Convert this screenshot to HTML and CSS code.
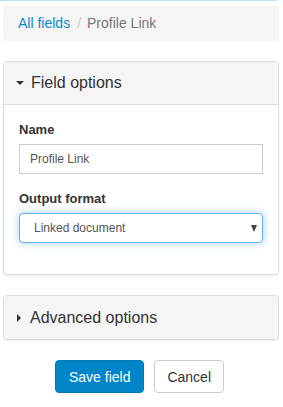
FILE: index.html
```html
<!DOCTYPE html>
<html lang="en">
<head>
  <meta charset="UTF-8" />
  <meta name="viewport" content="width=device-width, initial-scale=1.0" />
  <title>Edit field – Profile Link</title>
  <link rel="stylesheet" href="styles.css">
</head>
<body>
  <div class="topline"></div>

  <ol class="breadcrumb">
    <li><a href="#">All fields</a></li>
    <li class="active">Profile Link</li>
  </ol>

  <form class="field-form" autocomplete="off">
    <div class="panel">
      <div class="panel-heading">
        <span class="caret-down"></span>Field options
      </div>
      <div class="panel-body">
        <div class="form-group">
          <label for="name">Name</label>
          <input type="text" id="name" class="form-control" value="Profile Link" />
        </div>
        <div class="form-group">
          <label for="format">Output format</label>
          <div class="select-wrap">
            <select id="format" class="form-control focused">
              <option>Linked document</option>
            </select>
          </div>
        </div>
      </div>
    </div>

    <div class="panel panel-collapsed">
      <div class="panel-heading">
        <span class="caret-right"></span>Advanced options
      </div>
    </div>

    <div class="actions">
      <button type="submit" class="btn btn-primary">Save field</button>
      <button type="button" class="btn btn-default">Cancel</button>
    </div>
  </form>
</body>
</html>
```

FILE: styles.css
```css
:root {
  --azul: #0085c8;
  --gris-fondo: #f5f5f5;
  --borde: #dddddd;
  --texto: #333;
}

* {
  box-sizing: border-box;
}

body {
  font-family: "Liberation Sans", Arial, sans-serif;
  font-size: 14px;
  margin: 0;
  padding: 0 4px 0 3px;
  background: #fff;
  color: var(--texto);
}

.topline {
  height: 1px;
  margin: 0 2px 0 -3px;
  background: #b5e6ef;
}

.breadcrumb {
  list-style: none;
  margin: 5px 0 20px;
  padding: 8px 15px;
  line-height: 19px;
  background: var(--gris-fondo);
  border-radius: 4px;
  display: flex;
}

.breadcrumb a {
  color: #0a8ad0;
  text-decoration: none;
}

.breadcrumb li + li::before {
  content: "/";
  color: #ccc;
  padding: 0 6px 0 7px;
}

.breadcrumb .active {
  color: #777;
}

.panel {
  border: 1px solid var(--borde);
  border-radius: 4px;
  box-shadow: 0 1px 2px rgba(0, 0, 0, 0.08);
  margin-bottom: 20px;
  background: #fff;
}

.panel-heading {
  background: var(--gris-fondo);
  padding: 10px 12px;
  line-height: 22px;
  font-size: 16px;
  color: var(--texto);
  border-bottom: 1px solid var(--borde);
  border-radius: 3px 3px 0 0;
  display: flex;
  align-items: center;
}

.panel-collapsed .panel-heading {
  border-bottom: none;
  border-radius: 3px;
  padding: 11px 12px 10px;
}

.caret-down {
  width: 0;
  height: 0;
  border-left: 4px solid transparent;
  border-right: 4px solid transparent;
  border-top: 4px solid #333;
  margin-right: 7px;
}

.caret-right {
  width: 0;
  height: 0;
  border-top: 4px solid transparent;
  border-bottom: 4px solid transparent;
  border-left: 4px solid #333;
  margin: 0 9px 0 1px;
}

.panel-body {
  padding: 16px 15px 15px;
}

.form-group {
  margin-bottom: 16px;
}

.form-group label {
  display: block;
  font-weight: bold;
  font-size: 13px;
  line-height: 18px;
  margin-bottom: 5px;
}

.form-control {
  display: block;
  width: 100%;
  height: 30px;
  padding: 5px 10px;
  font-family: inherit;
  font-size: 12px;
  color: #555;
  background: #fff;
  border: 1px solid #ccc;
  border-radius: 0;
}

.select-wrap {
  position: relative;
}

.select-wrap::after {
  content: "";
  position: absolute;
  right: 6px;
  top: 12px;
  border-left: 3.5px solid transparent;
  border-right: 3.5px solid transparent;
  border-top: 7px solid #444;
}

select.form-control {
  appearance: none;
  -webkit-appearance: none;
  padding-left: 14px;
  border-radius: 4px;
}

.focused {
  border-color: #66afe9;
  box-shadow: 0 0 8px rgba(102, 175, 233, 0.6);
}

.actions {
  display: flex;
  justify-content: center;
  gap: 10px;
  padding-right: 3px;
}

.btn {
  font-family: inherit;
  font-size: 14px;
  line-height: 20px;
  padding: 6px 12px;
  height: 33px;
  border-radius: 4px;
  cursor: pointer;
}

.btn-primary {
  background: var(--azul);
  border: 1px solid #0079b8;
  color: #fff;
  padding: 6px 13px;
}

.btn-default {
  background: #fff;
  border: 1px solid #ccc;
  color: var(--texto);
}
```
